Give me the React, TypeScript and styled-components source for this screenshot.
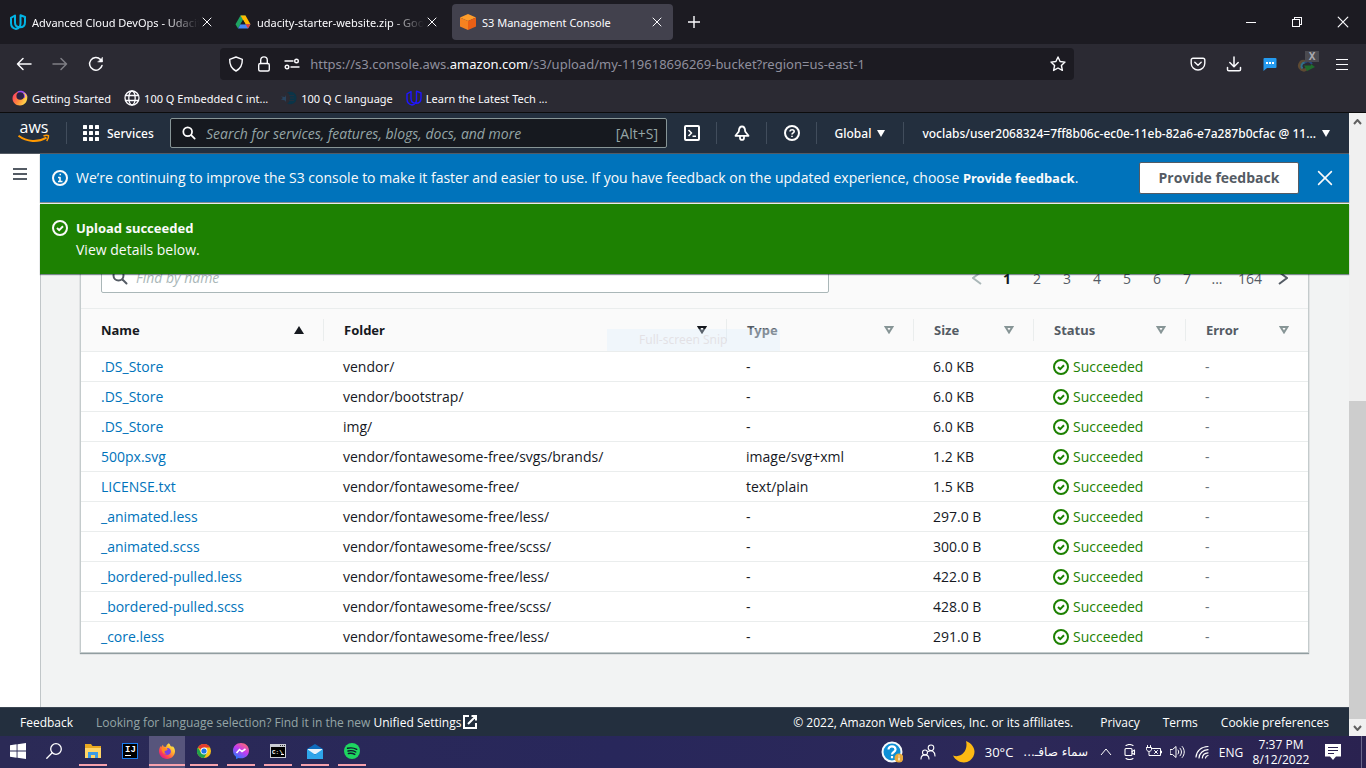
import React from "react";
import styled, { createGlobalStyle, css } from "styled-components";

const ember = `"Noto Sans", "Open Sans", sans-serif`;
const emberText = `"Open Sans", "Noto Sans", sans-serif`;
const segoe = `"Noto Sans", "Open Sans", sans-serif`;

const GlobalStyle = createGlobalStyle`
  *, *::before, *::after { box-sizing: border-box; }
  body { margin: 0; font-family: ${ember}; }
  button, input { font: inherit; color: inherit; margin: 0; padding: 0; border: 0; background: none; }
  a { color: inherit; text-decoration: none; }
  svg { display: block; flex: none; }
`;

const Screen = styled.div`
  display: flex;
  flex-direction: column;
  height: 100vh;
  overflow: hidden;
`;

/* ---------- Browser window ---------- */

const BrowserChrome = styled.header`
  flex: none;
  background: #2b2a33;
  color: #fbfbfe;
  font-family: ${segoe};
  font-size: 11px;
  border-bottom: 1px solid #0c0c0d;
`;

const TabStrip = styled.div`
  display: flex;
  align-items: center;
  gap: 4px;
  height: 44px;
  padding-left: 2px;
  background: #1c1b22;
`;

const Tab = styled.div<{ $active?: boolean }>`
  display: flex;
  align-items: center;
  gap: 6px;
  width: 221px;
  height: 36px;
  padding: 0 8px;
  border-radius: 4px;
  background: ${(p) => (p.$active ? "#42414d" : "transparent")};
`;

const TabTitle = styled.span<{ $fade?: boolean }>`
  flex: 1;
  min-width: 0;
  margin-right: -6px;
  overflow: hidden;
  white-space: nowrap;
  ${(p) =>
    p.$fade &&
    css`
      mask-image: linear-gradient(to right, #000 80%, transparent);
    `}
`;

const IconButton = styled.button<{ $w: number; $h?: number; $dim?: boolean }>`
  display: flex;
  flex: none;
  align-items: center;
  justify-content: center;
  width: ${(p) => p.$w}px;
  height: ${(p) => p.$h ?? 32}px;
  opacity: ${(p) => (p.$dim ? 0.4 : 1)};
`;

const WindowControls = styled.div`
  display: flex;
  margin-left: auto;
`;

const Toolbar = styled.div`
  display: flex;
  align-items: center;
  height: 40px;
  padding: 0 6px;
`;

const Spring = styled.div`
  flex: 1;
`;

const UrlBar = styled.div`
  display: flex;
  flex: 8;
  align-items: center;
  height: 32px;
  padding: 0 2px;
  border-radius: 4px;
  background: #1c1b22;
`;

const UrlText = styled.div`
  flex: 1;
  min-width: 0;
  padding-left: 4px;
  overflow: hidden;
  white-space: nowrap;
  color: #8f8f9d;
  font-size: 13px;
  outline: 0;

  b {
    color: #fbfbfe;
    font-weight: 400;
  }
`;

const Extension = styled.span`
  position: relative;
`;

const ExtensionBadge = styled.span`
  position: absolute;
  top: -5px;
  right: -4px;
  width: 14px;
  height: 11px;
  background: #4a4a50;
  color: #a8a8ad;
  font-size: 10px;
  font-weight: 700;
  line-height: 11px;
  text-align: center;
`;

const Bookmarks = styled.nav`
  display: flex;
  align-items: center;
  gap: 13px;
  height: 28px;
  padding-left: 12px;
`;

const Bookmark = styled.a`
  display: flex;
  align-items: center;
  gap: 4px;
  white-space: nowrap;
`;

/* ---------- AWS page ---------- */

const Viewport = styled.div`
  display: flex;
  flex: 1;
  min-height: 0;
`;

const Page = styled.div`
  display: flex;
  flex: 1;
  flex-direction: column;
  min-width: 0;
  position: relative;
`;

const AwsHeader = styled.header`
  display: flex;
  flex: none;
  align-items: center;
  height: 41px;
  padding: 0 19px 0 18px;
  border-bottom: 1px solid #545b64;
  background: #232f3e;
  color: #fff;
  font-size: 12px;
  font-weight: 500;
`;

const Divider = styled.span<{ $gap?: number }>`
  flex: none;
  width: 1px;
  height: 22px;
  margin: 0 ${(p) => p.$gap ?? 0}px;
  background: #414d5c;
`;

const ServicesButton = styled.button`
  display: flex;
  align-items: center;
  gap: 8px;
  width: 87px;
  white-space: nowrap;
`;

const SearchBox = styled.label`
  display: flex;
  flex: 1;
  align-items: center;
  gap: 10px;
  max-width: 497px;
  height: 30px;
  padding: 0 8px 0 11px;
  border: 1px solid #879596;
  border-radius: 2px;
  background: #16191f;
  color: #95a5a6;
  font-family: ${emberText};
  font-size: 14px;
  font-weight: 400;

  input {
    flex: 1;
    min-width: 0;
    outline: 0;
  }
  input::placeholder {
    color: #95a5a6;
    font-style: italic;
    opacity: 1;
  }
`;

const HeaderRight = styled.div`
  display: flex;
  flex: 1;
  align-items: center;
  justify-content: flex-end;
`;

const MenuButton = styled.button`
  display: flex;
  align-items: center;
  gap: 6px;
  white-space: nowrap;
`;

const Body = styled.div`
  display: flex;
  flex: 1;
  min-height: 0;
`;

const SideNav = styled.nav`
  display: flex;
  justify-content: center;
  width: 40px;
  padding-top: 4px;
  background: #fff;
`;

const Main = styled.main`
  display: flex;
  flex: 1;
  flex-direction: column;
  min-width: 0;
`;

const Flash = styled.section<{ $tone: "info" | "success" }>`
  display: flex;
  flex: none;
  align-items: ${(p) => (p.$tone === "info" ? "center" : "flex-start")};
  gap: 8px;
  padding: ${(p) => (p.$tone === "info" ? "8px 7px 8px 12px" : "13px 12px")};
  margin-bottom: ${(p) => (p.$tone === "info" ? 2 : 0)}px;
  background: ${(p) => (p.$tone === "info" ? "#0073bb" : "#1d8102")};
  box-shadow: 0 1px 1px rgba(0, 28, 36, 0.5);
  color: #fafafa;
  font-family: ${emberText};
  font-size: 14px;
  line-height: 22px;
  z-index: 1;

  > svg {
    margin: 3px 0;
  }
  p {
    margin: 0;
  }
  b {
    font-family: ${ember};
    font-size: 13px;
  }
`;

const FlashText = styled.div`
  flex: 1;
  min-width: 0;
`;

const FeedbackButton = styled.button`
  width: 160px;
  height: 32px;
  border: 1px solid #545b64;
  border-radius: 2px;
  background: #fff;
  color: #545b64;
  font-weight: 700;
`;

const ScrollArea = styled.div`
  display: flex;
  flex: 1;
  flex-direction: column;
  justify-content: flex-end;
  min-height: 0;
  overflow: hidden;
  padding: 0 40px 54px 39px;
  border-left: 1px solid #c1c6c8;
  background: #f2f3f3;
`;

const Panel = styled.section`
  position: relative;
  flex: none;
  border: solid #c4cbcc;
  border-width: 0 1px 1px;
  background: #fff;
  box-shadow: 0 1px 1px rgba(0, 28, 36, 0.4);
`;

const PanelTools = styled.div`
  display: flex;
  align-items: center;
  justify-content: space-between;
  padding: 15px 10px 15px 20px;
  background: #fafafa;
  font-family: ${emberText};
`;

const Filter = styled.label`
  display: flex;
  flex: 1;
  align-items: center;
  gap: 8px;
  max-width: 728px;
  height: 32px;
  padding: 0 10px;
  border: 1px solid #aab7b8;
  border-radius: 2px;
  background: #fff;
  font-size: 14px;

  input {
    flex: 1;
    min-width: 0;
    outline: 0;
  }
  input::placeholder {
    color: #aab7b8;
    font-style: italic;
    opacity: 1;
  }
`;

const Pagination = styled.nav`
  display: flex;
  align-items: center;
  padding-top: 2px;
  color: #545b64;
  font-size: 14px;
`;

const PageButton = styled.button<{ $current?: boolean; $wide?: boolean }>`
  display: flex;
  justify-content: center;
  width: ${(p) => (p.$wide ? 36 : 30)}px;
  ${(p) =>
    p.$current &&
    css`
      color: #16191f;
      font-weight: 700;
    `}
`;

const Table = styled.table`
  width: 100%;
  border-collapse: separate;
  border-spacing: 0;
  table-layout: fixed;
  color: #16191f;
  font-family: ${emberText};
  font-size: 14px;
  line-height: 22px;
`;

const Col = styled.col<{ $w?: number }>`
  width: ${(p) => (p.$w ? `${p.$w}px` : "auto")};
`;

const HeadCell = styled.th<{ $muted?: boolean }>`
  height: 44px;
  padding: 0;
  border: solid #eaeded;
  border-width: 1px 0;
  background: #fafafa;
  color: ${(p) => (p.$muted ? "#545b64" : "#16191f")};
  font-family: ${ember};
  font-size: 13px;
  text-align: left;
`;

const HeadInner = styled.button<{ $last?: boolean }>`
  display: flex;
  align-items: center;
  justify-content: space-between;
  width: 100%;
  padding: 0 19px 0 20px;
  border-right: ${(p) => (p.$last ? 0 : 1)}px solid #eaeded;
  font-weight: 700;
`;

const Cell = styled.td`
  height: 30px;
  padding: 0 0 0 19px;
  border-bottom: 1px solid #eaeded;
  white-space: nowrap;

  &:first-child {
    padding-left: 20px;
  }
  tr:last-child > & {
    border-bottom: 0;
  }
`;

const FileLink = styled.a`
  color: #0073bb;
`;

const Status = styled.span`
  display: flex;
  align-items: center;
  gap: 4px;
  color: #1d8102;
`;

const Muted = styled.span`
  color: #687078;
`;

const SnipGhost = styled.div`
  position: absolute;
  top: 83px;
  left: 526px;
  width: 173px;
  height: 22px;
  padding-left: 32px;
  background: rgba(222, 239, 252, 0.35);
  color: rgba(215, 205, 208, 0.5);
  font-family: ${segoe};
  font-size: 12px;
  line-height: 22px;
  pointer-events: none;
`;

const Footer = styled.footer`
  display: flex;
  flex: none;
  align-items: center;
  height: 29px;
  padding: 0 20px;
  border-top: 1px solid #3b4653;
  background: #232f3e;
  color: #fff;
  font-family: ${emberText};
  font-size: 12px;
  font-weight: 500;
  white-space: nowrap;
`;

const FooterHint = styled.span`
  margin-left: 23px;
  color: #95a5a6;
  font-weight: 400;
`;

const FooterLink = styled.a`
  display: inline-flex;
  align-items: center;
  gap: 2px;
`;

const FooterRight = styled.div`
  display: flex;
  gap: 23px;
  margin-left: auto;

  span {
    margin-right: 4px;
  }
`;

/* ---------- Scrollbar ---------- */

const Scrollbar = styled.div`
  display: flex;
  flex-direction: column;
  flex: none;
  width: 17px;
  background: #f0f0f0;
`;

const Track = styled.div`
  display: flex;
  flex: 1;
  flex-direction: column;
  justify-content: flex-end;
`;

const Thumb = styled.div`
  height: 54%;
  background: #cdcdcd;
`;

/* ---------- Taskbar ---------- */

const Taskbar = styled.footer`
  display: flex;
  flex: none;
  align-items: center;
  height: 32px;
  background: linear-gradient(90deg, #2b2a56, #28275b 45%, #2c2858 75%, #2a2250);
  color: #fff;
  font-family: ${emberText};
  font-size: 12px;
`;

const TaskButton = styled.button<{ $running?: boolean; $active?: boolean }>`
  display: flex;
  align-items: center;
  justify-content: center;
  width: 36px;
  height: 32px;
  padding-bottom: 2px;
  position: relative;
  background: ${(p) => (p.$active ? "#57557c" : "transparent")};

  ${(p) =>
    p.$running &&
    css`
      &::after {
        content: "";
        position: absolute;
        right: ${p.$active ? 0 : 4}px;
        bottom: 2px;
        left: ${p.$active ? 0 : 4}px;
        height: 2px;
        background: #f6a1ac;
      }
    `}
`;

const Apps = styled.div`
  display: flex;
  gap: 1px;
  margin-left: 3px;
`;

const Tray = styled.div`
  display: flex;
  align-items: center;
  margin-left: auto;
`;

const Weather = styled.button`
  display: flex;
  align-items: center;
  gap: 10px;
  padding: 0 6px 0 7px;
  font-size: 13px;
  white-space: nowrap;
`;

const WeatherText = styled.span`
  font-family: "DejaVu Sans", sans-serif;
  font-size: 12px;
`;

const Language = styled.button`
  width: 34px;
`;

const Clock = styled.button`
  width: 66px;
  font-size: 12px;
  line-height: 15px;
  text-align: center;
`;

const ShowDesktop = styled.button`
  width: 5px;
  height: 32px;
  margin-left: 9px;
  border-left: 1px solid #6a678a;
`;

/* ---------- Icons ---------- */

type StrokeProps = {
  w?: number;
  h?: number;
  box?: string;
  sw?: number;
  color?: string;
  crisp?: boolean;
  children: React.ReactNode;
};

const Stroke = ({ w = 16, h, box, sw = 1, color = "currentColor", crisp, children }: StrokeProps) => (
  <svg
    width={w}
    height={h ?? w}
    viewBox={box ?? `0 0 ${w} ${h ?? w}`}
    fill="none"
    stroke={color}
    strokeWidth={sw}
    strokeLinecap={crisp ? "butt" : "round"}
    strokeLinejoin={crisp ? "miter" : "round"}
    shapeRendering={crisp ? "crispEdges" : "auto"}
    aria-hidden="true"
  >
    {children}
  </svg>
);

const Udacity = ({ color, sw = 1.8 }: { color: string; sw?: number }) => (
  <Stroke w={16} h={16} sw={sw} color={color}>
    <path d="M5 1.500 1 3.800V9c0 3.200 2 5.400 5 6 2.800-.6 4.500-2.600 4.500-5.500V1.200L15 3v5c0 3.500-2 5.300-5 5.300S5 11.500 5 8.500z" />
  </Stroke>
);

const Drive = () => (
  <svg width="16" height="16" viewBox="0 0 16 16" aria-hidden="true">
    <path d="M5.500 1.500h5L8 6 3 14.500.500 10.200z" fill="#1ea362" />
    <path d="M5.500 1.500h5l5 8.700h-5z" fill="#ffba00" />
    <path d="M3 14.500 5.500 10.200h10L13 14.500z" fill="#4688f4" />
    <path d="M13 14.500 10.500 10.200h5z" fill="#ea4335" />
    <path d="M8 6 10.500 10.200h-5z" fill="#1c1b22" />
  </svg>
);

const Cube = () => (
  <svg width="16" height="16" viewBox="0 0 16 16" aria-hidden="true">
    <path d="m8 0 8 3.500-8 3.500-8-3.500z" fill="#ff9d2b" />
    <path d="M0 3.500 8 7v9l-8-3.500z" fill="#f58220" />
    <path d="M16 3.500 8 7v9l8-3.500z" fill="#ea5f14" />
  </svg>
);

const CloseX = ({ size = 10, sw = 1 }: { size?: number; sw?: number }) => (
  <Stroke w={size} box="0 0 10 10" sw={sw}>
    <path d="m1 1 8 8M9 1 1 9" />
  </Stroke>
);

const FirefoxMark = ({ size }: { size: number }) => (
  <svg width={size} height={size} viewBox="0 0 16 16" aria-hidden="true">
    <defs>
      <linearGradient id="ffx" x1="0.9" y1="0.1" x2="0.15" y2="0.9">
        <stop offset="0" stopColor="#fff44f" />
        <stop offset="0.35" stopColor="#ffb02e" />
        <stop offset="0.7" stopColor="#ff4f4a" />
        <stop offset="1" stopColor="#e31587" />
      </linearGradient>
    </defs>
    <path
      d="M9.800.300c1 .8 1.500 1.700 1.700 2.600.8.200 1.500.7 2 1.300.1-.5 0-1-.1-1.400C15 4.300 16 6.200 16 8.300 16 12.600 12.400 16 8 16s-8-3.400-8-7.700c0-2 .7-3.800 1.700-5.200l.3 1.300C2.500 3.300 3.200 2.300 4 1.700c0 .8.300 1.500.8 2 .9 0 1.600 0 2.200.300C7.400 2.500 8.400 1.100 9.800.300Z"
      fill="url(#ffx)"
    />
    <path d="M7.900 5.200c2.200-.5 4 1.100 4 3.200 0 2.100-1.700 3.600-3.800 3.600S4.500 10.400 4.500 8.600c0-.7.300-1.400.7-1.900.8.600 1.700.7 2.700.300.8-.3.700-1.100 0-1.800Z" fill="#7542e5" />
    <path d="M2.500 5.500c1.500-1 3.300-.8 4.500.2 1 .2 1.700.500 1.400 1-.6.900-2 .7-2.800 1.500-.4 1.400.8 2.300 2.200 2.300-2.700 1.200-4.900-.6-5.300-5Z" fill="#ff8a1e" />
  </svg>
);

const GettingStarted = () => (
  <svg width="16" height="16" viewBox="0 0 16 16" aria-hidden="true">
    <defs>
      <linearGradient id="gst" x1="0" y1="0.2" x2="1" y2="0.7">
        <stop offset="0" stopColor="#ff3a66" />
        <stop offset="0.5" stopColor="#ff8a3a" />
        <stop offset="1" stopColor="#ffe14d" />
      </linearGradient>
    </defs>
    <path d="M3 3.500C4 2.500 5.500 1.500 6.500 1.500L15.200 6c.8 5-2.500 9.500-7.200 9.500S.5 12 .5 8.500C.5 6 1.500 4.500 3 3.500Z" fill="url(#gst)" />
    <path d="M5.500 1.500c3-1.800 8.800-.2 9.900 5L12 8 6 3z" fill="#9a4df0" />
    <circle cx="8.200" cy="6" r="3.800" fill="#2b2145" />
    <path d="M11 2.800c2.600 1.700 3.200 5.400-.2 8C13.800 10.500 15.200 8.200 14.800 5.600 14.200 4 12.600 2.800 11 2.800Z" fill="#ffd24a" />
  </svg>
);

const Globe = () => (
  <Stroke w={16} sw={1.3}>
    <circle cx="8" cy="8" r="7" />
    <ellipse cx="8" cy="8" rx="3.200" ry="7" />
    <path d="M1.500 5.500h13M1.500 10.500h13" />
  </Stroke>
);

const DarkFish = () => (
  <svg width="16" height="16" viewBox="0 0 16 16" aria-hidden="true">
    <path d="M0 6.500 4 7l1-2v7l-1-1.500L0 9.500 2 8z" fill="#2a4560" />
    <path d="M6 2.500c5-2 9.500.5 9.500 5.500S11 15.500 6 13.500c2-.8 3-2.500 3-5.500S8 3.500 6 2.500z" fill="#0b3448" />
    <path d="M8 5.500h5M9 8h4M8 10.500h5" stroke="#23303e" />
  </svg>
);

const ShieldIcon = () => (
  <Stroke w={16} sw={1.4}>
    <path d="M8 1 14.300 3.300c.2 5-1.300 9.200-6.300 11.700C3 12.500 1.500 8.300 1.700 3.300z" />
  </Stroke>
);

const LockIcon = () => (
  <Stroke w={16} sw={1.4}>
    <rect x="2.700" y="7.500" width="10.600" height="7.500" rx="1.500" />
    <path d="M4.700 7.500V4.200a3.300 3.300 0 0 1 6.600 0v3.300" />
  </Stroke>
);

const PermissionsIcon = () => (
  <Stroke w={16} sw={1.4}>
    <path d="M1 5h8M7 11h8" />
    <circle cx="12.500" cy="5" r="1.800" />
    <circle cx="3" cy="11" r="1.800" />
  </Stroke>
);

const StarIcon = () => (
  <Stroke w={16} sw={1.4}>
    <path d="m8 1 2.100 4.500 4.900.6-3.600 3.400 1 4.900L8 12l-4.400 2.400 1-4.900L1 6.100l4.900-.6z" />
  </Stroke>
);

const SearchIcon = ({ size = 16, color = "currentColor" }: { size?: number; color?: string }) => (
  <Stroke w={size} box="0 0 16 16" sw={2} color={color}>
    <circle cx="6.500" cy="6.500" r="5" />
    <path d="m10.500 10.500 4 4" />
  </Stroke>
);

const CheckCircle = () => (
  <Stroke w={16} sw={2}>
    <circle cx="8" cy="8" r="7" />
    <path d="m5 8 2.200 2.200L11 6.300" strokeLinecap="butt" strokeLinejoin="miter" />
  </Stroke>
);

const InfoCircle = () => (
  <Stroke w={16} sw={2}>
    <circle cx="8" cy="8" r="7" />
    <path d="M6 7.500h2V11M6 11.500h4.500M7.500 4.500h1.500" strokeWidth={1.6} strokeLinecap="butt" />
  </Stroke>
);

const Caret = () => (
  <svg width="8" height="7" viewBox="0 0 8 7" aria-hidden="true">
    <path d="M0 0h8L4 7z" fill="currentColor" />
  </svg>
);

const SortIcon = ({ kind }: { kind: "asc" | "dark" | "plain" }) =>
  kind === "asc" ? (
    <svg width="10" height="8" viewBox="0 0 10 8" aria-hidden="true">
      <path d="M5 0 10 8H0z" fill="#16191f" />
    </svg>
  ) : (
    <svg width="10" height="8" viewBox="0 0 10 8" aria-hidden="true">
      <path d="M1.600 1h6.800L5 6.400z" fill="none" stroke={kind === "dark" ? "#16191f" : "#879596"} strokeWidth="2" />
    </svg>
  );

const AwsLogo = () => (
  <svg width="32" height="22" viewBox="0 0 32 22" overflow="visible" aria-hidden="true">
    <text x="16" y="11" textAnchor="middle" fill="#fff" fontFamily="Open Sans, sans-serif" fontSize="16" fontWeight="500">
      aws
    </text>
    <path d="M.5 13.800c8.500 6.400 19.500 6.800 28 1.800" fill="none" stroke="#ff9900" strokeWidth="2" />
    <path d="M25.500 14c2-.9 4-.9 5-.3.200 1.400-.4 3.600-1.800 5.200" fill="none" stroke="#ff9900" strokeWidth="1.500" />
  </svg>
);

const GridIcon = () => (
  <svg width="16" height="16" viewBox="0 0 16 16" fill="#fff" aria-hidden="true">
    {[0, 6, 12].map((y) => [0, 6, 12].map((x) => <rect key={`${x}-${y}`} x={x} y={y} width="4" height="4" rx="0.5" />))}
  </svg>
);

const Chevron = ({ dir, color = "currentColor", w = 10, h = 14, sw = 2 }: { dir: "l" | "r" | "u" | "d"; color?: string; w?: number; h?: number; sw?: number }) => {
  const d = {
    l: `M${w - 1} 1 1 ${h / 2} ${w - 1} ${h - 1}`,
    r: `M1 1 ${w - 1} ${h / 2} 1 ${h - 1}`,
    u: `M1 ${h - 1} ${w / 2} 1 ${w - 1} ${h - 1}`,
    d: `M1 1 ${w / 2} ${h - 1} ${w - 1} 1`,
  }[dir];
  return (
    <Stroke w={w} h={h} sw={sw} color={color}>
      <path d={d} strokeLinecap="butt" strokeLinejoin="miter" />
    </Stroke>
  );
};

/* ---------- Data ---------- */

const files: [string, string, string, string][] = [
  [".DS_Store", "vendor/", "-", "6.0 KB"],
  [".DS_Store", "vendor/bootstrap/", "-", "6.0 KB"],
  [".DS_Store", "img/", "-", "6.0 KB"],
  ["500px.svg", "vendor/fontawesome-free/svgs/brands/", "image/svg+xml", "1.2 KB"],
  ["LICENSE.txt", "vendor/fontawesome-free/", "text/plain", "1.5 KB"],
  ["_animated.less", "vendor/fontawesome-free/less/", "-", "297.0 B"],
  ["_animated.scss", "vendor/fontawesome-free/scss/", "-", "300.0 B"],
  ["_bordered-pulled.less", "vendor/fontawesome-free/less/", "-", "422.0 B"],
  ["_bordered-pulled.scss", "vendor/fontawesome-free/scss/", "-", "428.0 B"],
  ["_core.less", "vendor/fontawesome-free/less/", "-", "291.0 B"],
];

const columns: { label: string; width?: number; sort: "asc" | "dark" | "plain" }[] = [
  { label: "Name", width: 243, sort: "asc" },
  { label: "Folder", sort: "dark" },
  { label: "Type", width: 187, sort: "plain" },
  { label: "Size", width: 120, sort: "plain" },
  { label: "Status", width: 152, sort: "plain" },
  { label: "Error", width: 122, sort: "plain" },
];

/* ---------- Sections ---------- */

const Browser = () => (
  <BrowserChrome>
    <TabStrip>
      <Tab>
        <Udacity color="#02b3e4" sw={2} />
        <TabTitle $fade>Advanced Cloud DevOps - Udacity</TabTitle>
        <IconButton $w={16} $h={16} aria-label="Close tab"><CloseX /></IconButton>
      </Tab>
      <Tab>
        <Drive />
        <TabTitle $fade>udacity-starter-website.zip - Google Drive</TabTitle>
        <IconButton $w={16} $h={16} aria-label="Close tab"><CloseX /></IconButton>
      </Tab>
      <Tab $active>
        <Cube />
        <TabTitle>S3 Management Console</TabTitle>
        <IconButton $w={16} $h={16} aria-label="Close tab"><CloseX /></IconButton>
      </Tab>
      <IconButton $w={34} aria-label="New tab">
        <Stroke w={12} sw={1.4}><path d="M6 0v12M0 6h12" /></Stroke>
      </IconButton>
      <WindowControls>
        <IconButton $w={46} aria-label="Minimize">
          <Stroke w={10} crisp><path d="M0 5.500h10" /></Stroke>
        </IconButton>
        <IconButton $w={46} aria-label="Restore">
          <Stroke w={10} crisp><path d="M.5 2.500h7v7h-7zM2.500 2.500v-2h7v7h-2" /></Stroke>
        </IconButton>
        <IconButton $w={46} aria-label="Close window"><CloseX size={12} /></IconButton>
      </WindowControls>
    </TabStrip>
    <Toolbar>
      <IconButton $w={36} aria-label="Back">
        <Stroke w={16} sw={1.5}><path d="M15 8H1.500M7 2.500 1.500 8 7 13.500" /></Stroke>
      </IconButton>
      <IconButton $w={36} $dim aria-label="Forward">
        <Stroke w={16} sw={1.5}><path d="M1 8h13.500M9 2.500 14.500 8 9 13.500" /></Stroke>
      </IconButton>
      <IconButton $w={36} aria-label="Reload">
        <Stroke w={16} sw={1.5}>
          <path d="M14 9.500A6.300 6.300 0 1 1 12.500 3.500L14 5" />
          <path d="M14.500 1.500v4.500H10z" fill="currentColor" strokeWidth={0.5} />
        </Stroke>
      </IconButton>
      <Spring />
      <UrlBar>
        <IconButton $w={28} aria-label="Tracking protection"><ShieldIcon /></IconButton>
        <IconButton $w={28} aria-label="Connection security"><LockIcon /></IconButton>
        <IconButton $w={28} aria-label="Permissions"><PermissionsIcon /></IconButton>
        <UrlText role="textbox" aria-label="Address" tabIndex={0}>
          https://s3.console.aws.<b>amazon.com</b>/s3/upload/my-119618696269-bucket?region=us-east-1
        </UrlText>
        <IconButton $w={28} aria-label="Bookmark this page"><StarIcon /></IconButton>
      </UrlBar>
      <Spring />
      <IconButton $w={36} aria-label="Save to Pocket">
        <Stroke w={16} sw={1.4}>
          <path d="M3 2.200h10a1.800 1.800 0 0 1 1.800 1.800v3.200a6.800 6.800 0 0 1-13.600 0V4A1.800 1.800 0 0 1 3 2.200Z" />
          <path d="m4.800 6.200 3.200 3 3.200-3" />
        </Stroke>
      </IconButton>
      <IconButton $w={36} aria-label="Downloads">
        <Stroke w={16} sw={1.5}>
          <path d="M8 1v9.500M3.800 6.500 8 10.700l4.200-4.200M1.500 11.500v2c0 .8.500 1.300 1.300 1.300h10.400c.8 0 1.300-.5 1.300-1.300v-2" />
        </Stroke>
      </IconButton>
      <IconButton $w={36} aria-label="Chat extension">
        <svg width="14" height="14" viewBox="0 0 14 14" aria-hidden="true">
          <path d="M1.500 1h11q1 0 1 1v8q0 1-1 1H4L.500 14V2q0-1 1-1z" fill="#249bf0" />
          <path d="M3 6h2M6 6h2M9 6h2" stroke="#fff" strokeWidth="2" />
        </svg>
      </IconButton>
      <IconButton $w={36} aria-label="Download manager extension">
        <Extension>
          <svg width="18" height="16" viewBox="0 0 18 16" aria-hidden="true">
            <path d="M8 5.500a4.300 4.300 0 1 0 2 7" fill="none" stroke="#5e4a32" strokeWidth="3" />
            <path d="M8 6.500a3.500 3.500 0 0 0-2.500 6" fill="none" stroke="#31708a" strokeWidth="2" />
            <path d="M8 7c2-3 5-2 7 1" fill="none" stroke="#28467e" strokeWidth="2" />
            <path d="M7 9.500h7V8l4 3-8 4z" fill="#1f6b2c" />
          </svg>
          <ExtensionBadge>X</ExtensionBadge>
        </Extension>
      </IconButton>
      <IconButton $w={36} aria-label="Application menu">
        <Stroke w={12} h={11} crisp><path d="M0 .5h12M0 5.500h12M0 10.500h12" /></Stroke>
      </IconButton>
    </Toolbar>
    <Bookmarks aria-label="Bookmarks">
      <Bookmark href="#"><GettingStarted />Getting Started</Bookmark>
      <Bookmark href="#"><Globe />100 Q Embedded C int...</Bookmark>
      <Bookmark href="#"><DarkFish />100 Q C language</Bookmark>
      <Bookmark href="#"><Udacity color="#2015ff" sw={1.4} />Learn the Latest Tech ...</Bookmark>
    </Bookmarks>
  </BrowserChrome>
);

const ConsoleHeader = () => (
  <AwsHeader>
    <a href="#" aria-label="AWS home"><AwsLogo /></a>
    <Divider $gap={16} />
    <ServicesButton><GridIcon />Services</ServicesButton>
    <SearchBox>
      <SearchIcon size={14} color="#fff" />
      <input type="search" aria-label="Search" placeholder="Search for services, features, blogs, docs, and more" />
      <span>[Alt+S]</span>
    </SearchBox>
    <IconButton $w={49} aria-label="CloudShell">
      <Stroke w={16} sw={2}>
        <rect x="1" y="1" width="14" height="14" rx="1" />
        <path d="m4.500 5 3 3-3 3M8.500 11.200H12" strokeWidth={1.6} strokeLinecap="butt" />
      </Stroke>
    </IconButton>
    <Divider />
    <IconButton $w={49} aria-label="Notifications">
      <Stroke w={16} sw={1.8}>
        <path d="M8 1.500c-3 0-3 2.500-3.200 5L1.500 10.800h13L11.200 6.500c-.2-2.500-.2-5-3.200-5ZM6 11.500v1.200c0 3 4 3 4 0v-1.200" />
      </Stroke>
    </IconButton>
    <Divider />
    <IconButton $w={49} aria-label="Help">
      <Stroke w={16} sw={2}>
        <circle cx="8" cy="8" r="7" />
        <path d="M6 6.600c0-2.600 4.200-2.400 4.200 0C10.200 8 8 7.800 8 9.500M8 10.700v1.400" strokeWidth={1.6} strokeLinecap="butt" />
      </Stroke>
    </IconButton>
    <Divider />
    <HeaderRight>
      <MenuButton>Global<Caret /></MenuButton>
      <Divider $gap={18} />
      <MenuButton>voclabs/user2068324=7ff8b06c-ec0e-11eb-82a6-e7a287b0cfac @ 11...<Caret /></MenuButton>
    </HeaderRight>
  </AwsHeader>
);

const UploadTable = () => (
  <Panel>
    <PanelTools>
      <Filter>
        <SearchIcon color="#545b64" />
        <input type="search" aria-label="Find files" placeholder="Find by name" />
      </Filter>
      <Pagination aria-label="Pagination">
        <PageButton aria-label="Previous page"><Chevron dir="l" color="#aab7b8" /></PageButton>
        {["1", "2", "3", "4", "5", "6", "7", "..."].map((n) => (
          <PageButton key={n} $current={n === "1"}>{n}</PageButton>
        ))}
        <PageButton $wide>164</PageButton>
        <PageButton aria-label="Next page"><Chevron dir="r" /></PageButton>
      </Pagination>
    </PanelTools>
    <Table>
      <colgroup>
        {columns.map((c) => <Col key={c.label} $w={c.width} />)}
      </colgroup>
      <thead>
        <tr>
          {columns.map((c, i) => (
            <HeadCell key={c.label} $muted={c.sort === "plain"}>
              <HeadInner $last={i === columns.length - 1}>
                {c.label}
                <SortIcon kind={c.sort} />
              </HeadInner>
            </HeadCell>
          ))}
        </tr>
      </thead>
      <tbody>
        {files.map(([name, folder, type, size]) => (
          <tr key={name + folder}>
            <Cell><FileLink href="#">{name}</FileLink></Cell>
            <Cell>{folder}</Cell>
            <Cell>{type}</Cell>
            <Cell>{size}</Cell>
            <Cell><Status><CheckCircle />Succeeded</Status></Cell>
            <Cell><Muted>-</Muted></Cell>
          </tr>
        ))}
      </tbody>
    </Table>
    <SnipGhost>Full-screen Snip</SnipGhost>
  </Panel>
);

const WindowsTaskbar = () => (
  <Taskbar>
    <TaskButton aria-label="Start">
      <svg width="16" height="16" viewBox="0 0 16 16" fill="#fff" aria-hidden="true">
        <path d="M0 2.300 6.600 1.300v6.300H0zM7.500 1.200 16 0v7.600H7.500zM0 8.500h6.600v6.300L0 13.800zM7.500 8.500H16V16l-8.500-1.200z" />
      </svg>
    </TaskButton>
    <TaskButton aria-label="Search">
      <Stroke w={16} sw={1.3}><circle cx="10" cy="6" r="5.300" /><path d="M6.200 9.800.8 15.200" /></Stroke>
    </TaskButton>
    <Apps>
      <TaskButton $running aria-label="File Explorer">
        <svg width="16" height="14" viewBox="0 0 16 14" aria-hidden="true">
          <path d="M0 0h6l1.500 2H16v12H0z" fill="#e9a921" />
          <path d="M0 4h16v10H0z" fill="#ffd566" />
          <path d="M3 8h10v6h-3v-3H6v3H3z" fill="#3b9be6" />
        </svg>
      </TaskButton>
      <TaskButton aria-label="IntelliJ IDEA">
        <svg width="16" height="16" viewBox="0 0 16 16" aria-hidden="true">
          <rect x=".5" y=".5" width="15" height="15" fill="#000" stroke="#1a7cf0" />
          <text x="3" y="9" fill="#fff" fontSize="9" fontWeight="700" fontFamily="Liberation Mono, monospace">IJ</text>
          <path d="M3 12.500h6" stroke="#fff" />
        </svg>
      </TaskButton>
      <TaskButton $running $active aria-label="Firefox"><FirefoxMark size={16} /></TaskButton>
      <TaskButton $running aria-label="Chrome">
        <svg width="14" height="14" viewBox="0 0 14 14" aria-hidden="true">
          <circle cx="7" cy="7" r="7" fill="#fbc116" />
          <path d="M7 7 .9 3.500A7 7 0 0 1 13.100 3.500H7z" fill="#e33b2e" />
          <path d="M.9 3.500A7 7 0 0 0 7 14l3-5.200L7 7 4 8.800z" fill="#1fa04c" />
          <circle cx="7" cy="7" r="3.400" fill="#fff" />
          <circle cx="7" cy="7" r="2.600" fill="#1a73e8" />
        </svg>
      </TaskButton>
      <TaskButton $running aria-label="Messenger">
        <svg width="16" height="16" viewBox="0 0 16 16" aria-hidden="true">
          <defs>
            <linearGradient id="msg" x1="0.8" y1="0" x2="0.2" y2="1">
              <stop offset="0" stopColor="#ff6c6c" />
              <stop offset="0.45" stopColor="#c53bf0" />
              <stop offset="1" stopColor="#1a7dff" />
            </linearGradient>
          </defs>
          <path d="M8 0c4.600 0 8 3.300 8 7.700s-3.400 7.600-8 7.600c-.8 0-1.600-.1-2.300-.3L3 16v-2.300C1.100 12.300 0 10.200 0 7.700 0 3.300 3.400 0 8 0Z" fill="url(#msg)" />
          <path d="m3.500 10 3-3.500L9 8.500l3.500-2.500" fill="none" stroke="#fff" strokeWidth="1.600" />
        </svg>
      </TaskButton>
      <TaskButton $running aria-label="Command Prompt">
        <svg width="16" height="14" viewBox="0 0 16 14" aria-hidden="true">
          <rect width="16" height="14" fill="#c9ccd4" />
          <rect x="1" y="3" width="14" height="10" fill="#000" />
          <path d="M10 1.500h1M12 1.500h1M14 1.500h1" stroke="#333" />
          <text x="2" y="10" fill="#fff" fontSize="6" fontWeight="700" fontFamily="Liberation Mono, monospace">C:\</text>
          <path d="M11 10.500h3" stroke="#fff" />
        </svg>
      </TaskButton>
      <TaskButton $running aria-label="Mail">
        <svg width="16" height="15" viewBox="0 0 16 15" aria-hidden="true">
          <path d="M0 5 8 0l8 5v3H0z" fill="#0f6cbd" />
          <path d="M1 5h14v5H1z" fill="#e9f3fb" />
          <path d="m0 5 8 5.500L16 5v10H0z" fill="#2ea5ea" />
        </svg>
      </TaskButton>
      <TaskButton $running aria-label="Spotify">
        <svg width="16" height="16" viewBox="0 0 16 16" aria-hidden="true">
          <circle cx="8" cy="8" r="8" fill="#1ed760" />
          <path d="M3.500 5.300c3-.8 6.400-.5 9.200 1M4 8c2.600-.7 5.400-.4 7.800 1M4.400 10.500c2.200-.5 4.500-.2 6.400.9" fill="none" stroke="#0f1a30" strokeWidth="1.400" strokeLinecap="round" />
        </svg>
      </TaskButton>
    </Apps>
    <Tray>
      <IconButton $w={36} aria-label="Get help">
        <svg width="22" height="22" viewBox="0 0 22 22" aria-hidden="true">
          <circle cx="11" cy="11" r="9.500" fill="#0d8fd6" stroke="#f5f9fc" strokeWidth="2" />
          <path d="M7.500 8.500c0-4.500 7-4 7 0 0 2.500-3.500 2.500-3.500 5M11 15v2.200" fill="none" stroke="#fff" strokeWidth="2.200" />
          <circle cx="18" cy="17" r="4.500" fill="#e8a93c" />
          <path d="M18 14.500v1M18 16.500v3" stroke="#fff" strokeWidth="1.200" />
        </svg>
      </IconButton>
      <IconButton $w={36} aria-label="People">
        <Stroke w={16} sw={1.1}>
          <circle cx="5" cy="8.500" r="2.500" /><path d="M1 15c0-5.500 8-5.500 8 0" />
          <circle cx="11" cy="3.800" r="2.800" /><path d="M8.500 7.500c3-2 6.500 0 6.500 4.500" />
        </Stroke>
      </IconButton>
      <Weather>
        <svg width="22" height="22" viewBox="0 0 22 22" aria-hidden="true">
          <path d="M13 0c10 4 11 14 4 19.500C11.500 23.500 3 21 0 14.500 8 17.500 15.500 10 13 0Z" fill="#fdb913" />
        </svg>
        <span>30°C</span>
        <WeatherText dir="rtl" lang="ar">سماء صافـ...</WeatherText>
      </Weather>
      <IconButton $w={24} aria-label="Show hidden icons"><Chevron dir="u" w={12} h={8} sw={1} /></IconButton>
      <IconButton $w={24} aria-label="Meet now">
        <Stroke w={16} sw={1.1}>
          <rect x="3" y="4.500" width="7" height="7" rx="1" />
          <path d="m10 7.500 2.500-1.500v4.500L10 9M4 1.500C6 .3 9 .3 11 1.500M4 14.500c2 1.200 5 1.200 7 0" />
        </Stroke>
      </IconButton>
      <IconButton $w={24} aria-label="Battery">
        <Stroke w={16}>
          <path d="M6.500 4.500h8v7h-9M14.500 7h1v2h-1M1.500 1.500v2M4.500 1.500v2M.5 3.500h5v2.200C5.500 7 3 7.500 3 7.500S.5 7 .5 5.700zM3 7.500v4h2M8.500 6.500l3 3M11.500 6.500l-3 3" />
        </Stroke>
      </IconButton>
      <IconButton $w={24} aria-label="Volume">
        <Stroke w={16}>
          <path d="M.5 5.500h2L6 2.500v11l-3.500-3h-2zM8 6c1 1.200 1 2.800 0 4M10 4.200c2 2.200 2 5.400 0 7.600M12.200 2.500c2.800 3.200 2.800 7.800 0 11" />
        </Stroke>
      </IconButton>
      <IconButton $w={24} aria-label="Network">
        <Stroke w={14} sw={1.2}>
          <path d="M1 12C1.500 6 6 1.700 13 1.500M4 13c.3-4.500 3.800-8 9-8.300M7.300 13c.3-2.800 2.500-5 5.700-5.200M10.500 13c.2-1.500 1.200-2.300 2.500-2.500" />
        </Stroke>
      </IconButton>
      <Language>ENG</Language>
      <Clock>7:37 PM<br />8/12/2022</Clock>
      <IconButton $w={38} aria-label="Notifications">
        <svg width="16" height="16" viewBox="0 0 16 16" aria-hidden="true">
          <path d="M0 0h16v12.500h-5L8 16l-3-3.500H0z" fill="#fff" />
          <path d="M3 3.500h10M3 6.500h10M3 9.500h6" stroke="#2a2250" />
        </svg>
      </IconButton>
      <ShowDesktop aria-label="Show desktop" />
    </Tray>
  </Taskbar>
);

export default function App() {
  return (
    <Screen>
      <GlobalStyle />
      <Browser />
      <Viewport>
        <Page>
          <ConsoleHeader />
          <Body>
            <SideNav>
              <IconButton $w={40} aria-label="Open navigation">
                <Stroke w={14} h={12} sw={2} color="#545b64" crisp><path d="M0 1h14M0 6h14M0 11h14" /></Stroke>
              </IconButton>
            </SideNav>
            <Main>
              <Flash $tone="info">
                <InfoCircle />
                <FlashText>
                  We’re continuing to improve the S3 console to make it faster and easier to use. If you have feedback on the updated experience, choose <b>Provide feedback</b>.
                </FlashText>
                <FeedbackButton>Provide feedback</FeedbackButton>
                <IconButton $w={35} $h={30} aria-label="Dismiss"><CloseX size={16} sw={1} /></IconButton>
              </Flash>
              <Flash $tone="success">
                <CheckCircle />
                <FlashText>
                  <p><b>Upload succeeded</b></p>
                  <p>View details below.</p>
                </FlashText>
              </Flash>
              <ScrollArea>
                <UploadTable />
              </ScrollArea>
            </Main>
          </Body>
          <Footer>
            <FooterLink href="#">Feedback</FooterLink>
            <FooterHint>Looking for language selection? Find it in the new&nbsp;</FooterHint>
            <FooterLink href="#">
              Unified Settings
              <Stroke w={14} sw={2}>
                <path d="M6 1H1v12h12V8M8.500 1H13v4.500M13 1 5 9" strokeLinecap="butt" strokeLinejoin="miter" />
              </Stroke>
            </FooterLink>
            <FooterRight>
              <span>© 2022, Amazon Web Services, Inc. or its affiliates.</span>
              <FooterLink href="#">Privacy</FooterLink>
              <FooterLink href="#">Terms</FooterLink>
              <FooterLink href="#">Cookie preferences</FooterLink>
            </FooterRight>
          </Footer>
        </Page>
        <Scrollbar aria-hidden="true">
          <IconButton $w={17} $h={17} tabIndex={-1}><Chevron dir="u" color="#606060" w={9} h={6} /></IconButton>
          <Track><Thumb /></Track>
          <IconButton $w={17} $h={17} tabIndex={-1}><Chevron dir="d" color="#606060" w={9} h={6} /></IconButton>
        </Scrollbar>
      </Viewport>
      <WindowsTaskbar />
    </Screen>
  );
}
